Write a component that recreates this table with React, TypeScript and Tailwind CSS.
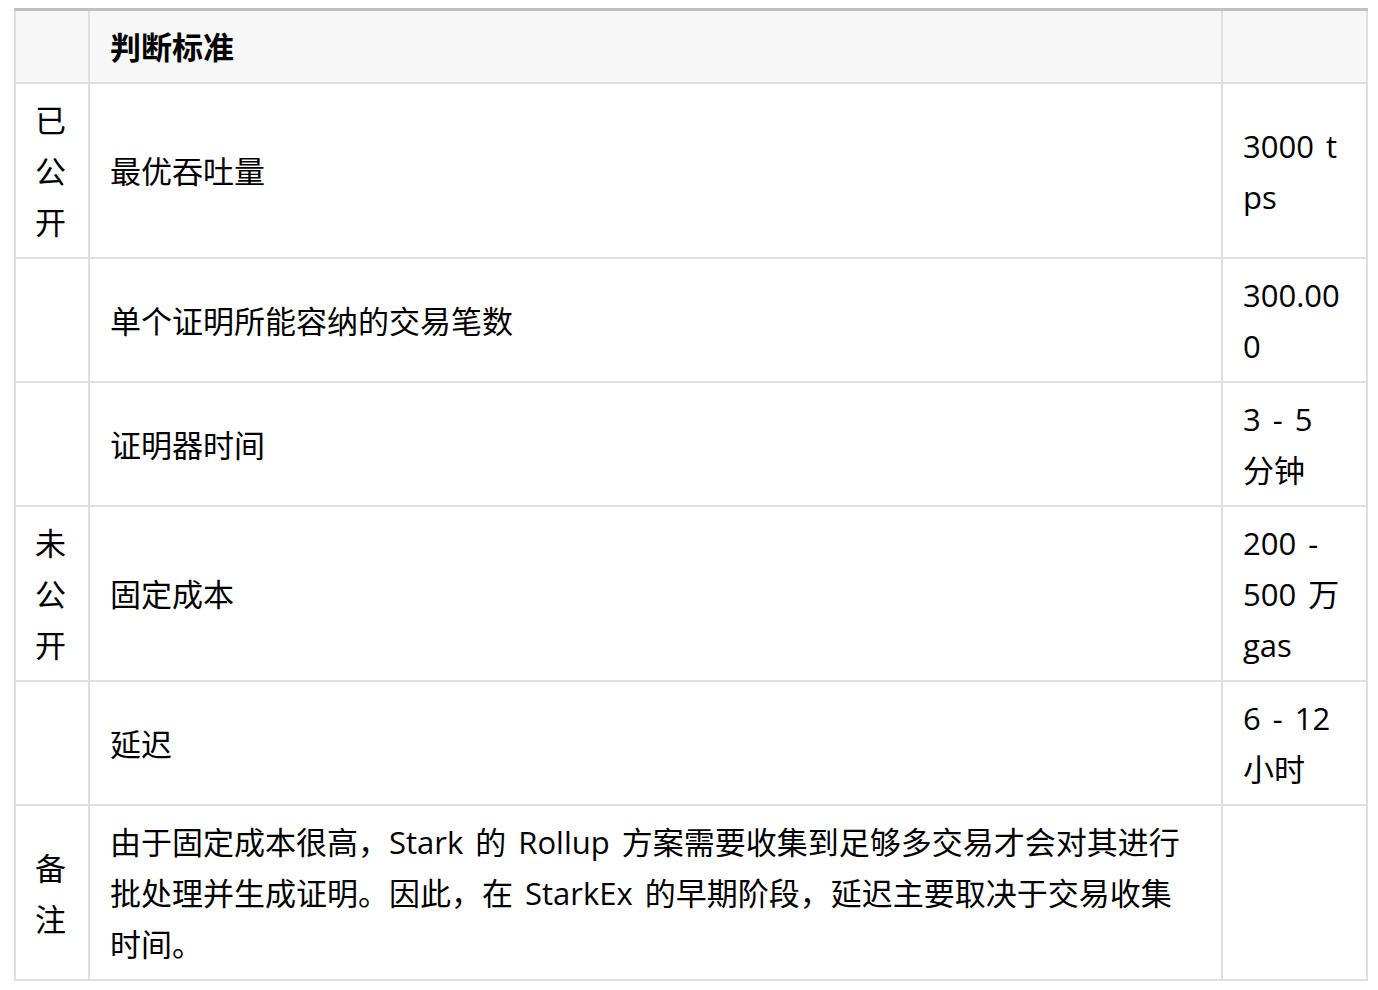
import React from "react";

const font = { fontFamily: '"Open Sans", "Noto Sans CJK SC", sans-serif' };

type Row = { a: string; b: React.ReactNode; c: string[] };

const rows: Row[] = [
  { a: "已公开", b: "最优吞吐量", c: ["3000 t", "ps"] },
  { a: "", b: "单个证明所能容纳的交易笔数", c: ["300.00", "0"] },
  { a: "", b: "证明器时间", c: ["3 - 5", "分钟"] },
  { a: "未公开", b: "固定成本", c: ["200 -", "500 万", "gas"] },
  { a: "", b: "延迟", c: ["6 - 12", "小时"] },
  {
    a: "备注",
    b: (
      <>
        由于固定成本很高，Stark 的 Rollup 方案需要收集到足够多交易才会对其进行
        <br />
        批处理并生成证明。因此，在 StarkEx 的早期阶段，延迟主要取决于交易收集
        <br />
        时间。
      </>
    ),
    c: [],
  },
];

export default function App() {
  return (
    <div className="min-h-[990px] bg-white pl-[14px] pt-[8px]" style={font}>
      <table className="w-[1352px] table-fixed border-collapse text-[31px] leading-[51px] text-black [word-spacing:4px]">
        <colgroup>
          <col className="w-[74px]" />
          <col className="w-[1133px]" />
          <col className="w-[145px]" />
        </colgroup>
        <thead>
          <tr className="bg-[#f7f7f7]">
            <th className="border-2 border-[#dfdfdf] border-t-[3px] border-t-[#c0c0c0] px-[19px] py-[10px]"></th>
            <th className="border-2 border-[#dfdfdf] border-t-[3px] border-t-[#c0c0c0] pl-[20px] pr-[19px] pb-[9px] pt-[11px] text-left font-bold">
              判断标准
            </th>
            <th className="border-2 border-[#dfdfdf] border-t-[3px] border-t-[#c0c0c0] px-[19px] py-[10px]"></th>
          </tr>
        </thead>
        <tbody>
          {rows.map((r, i) => (
            <tr key={i}>
              <td className="border-2 border-[#dfdfdf] px-[19px] pt-[11px] pb-[9px] align-middle break-all">
                {r.a}
              </td>
              <td className="border-2 border-[#dfdfdf] pl-[20px] pr-[19px] pt-[11px] pb-[9px] align-middle">
                {r.b}
              </td>
              <td className="border-2 border-[#dfdfdf] pl-[20px] pr-[16px] pt-[11px] pb-[9px] align-middle">
                {r.c.map((l, j) => (
                  <div key={j} className="whitespace-nowrap">
                    {l}
                  </div>
                ))}
              </td>
            </tr>
          ))}
        </tbody>
      </table>
    </div>
  );
}
